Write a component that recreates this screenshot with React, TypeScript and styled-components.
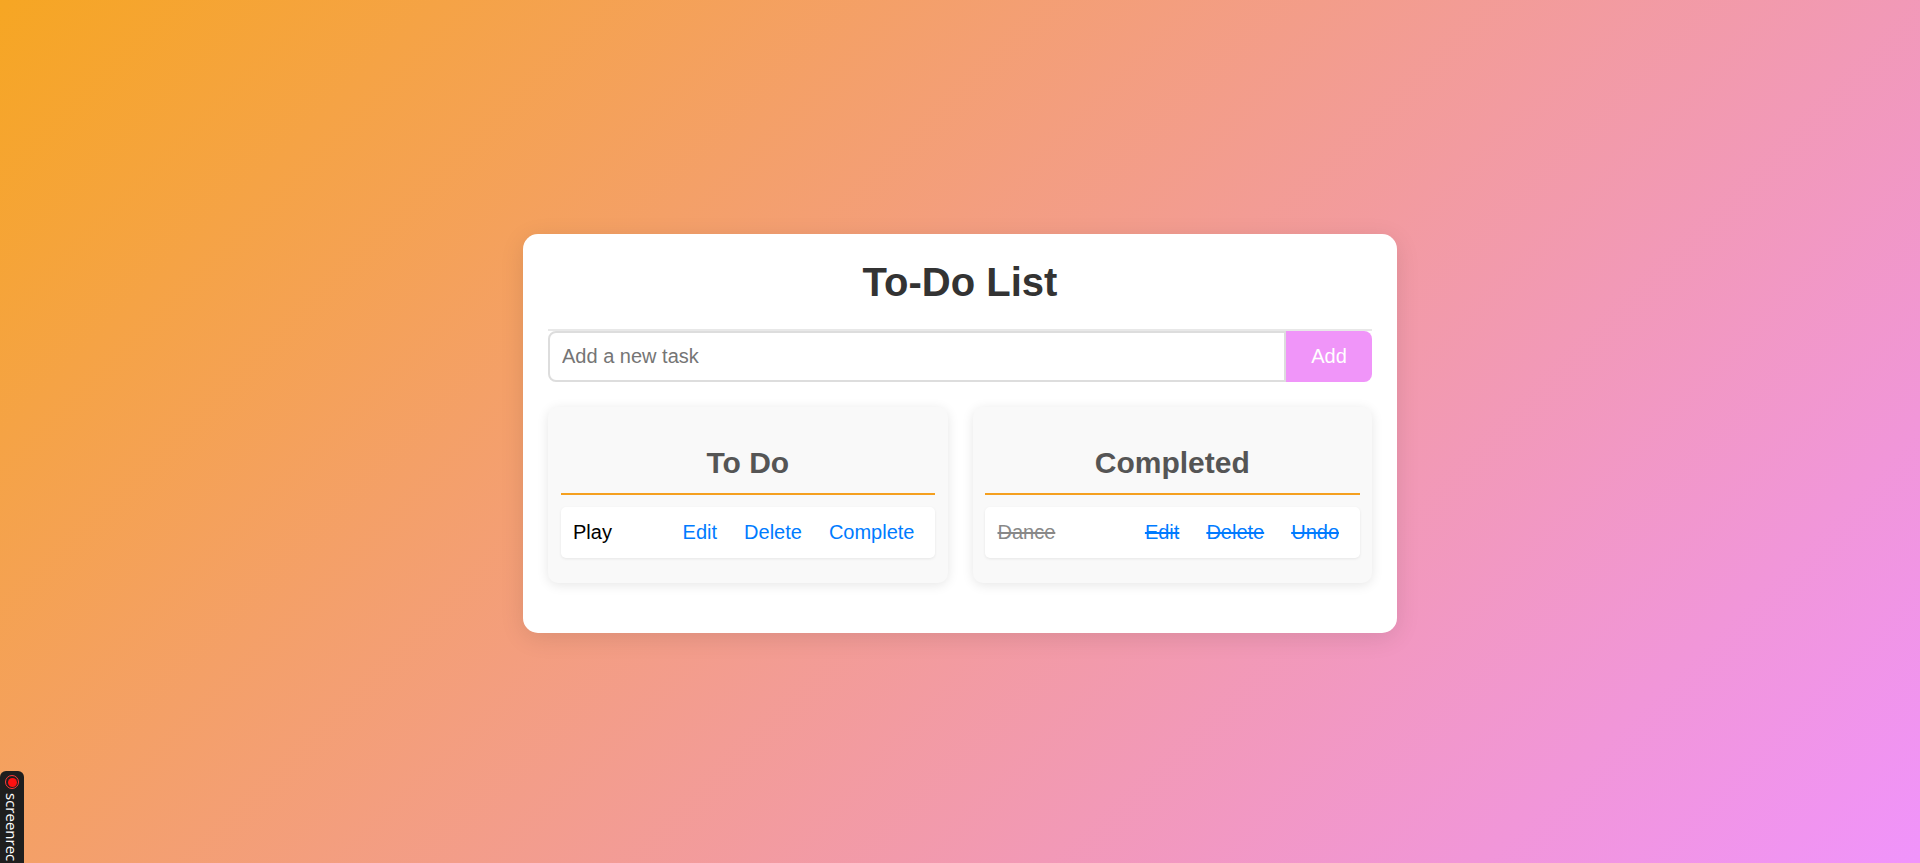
import React from "react";
import styled, { createGlobalStyle } from "styled-components";

const GlobalStyle = createGlobalStyle`
  html, body {
    margin: 0;
    padding: 0;
  }
  body {
    font-family: "Liberation Sans", Arial, sans-serif;
    background: linear-gradient(135deg, #f6a623 0%, #f093fb 100%);
    min-height: 100vh;
  }
  * { box-sizing: border-box; }
`;

const Page = styled.div`
  min-height: 100vh;
  display: flex;
  align-items: center;
  justify-content: center;
  padding-top: 4px;
`;

const Card = styled.div`
  width: 874px;
  background: #ffffff;
  border-radius: 15px;
  padding: 25px;
  box-shadow: 0 5px 25px rgba(0, 0, 0, 0.1);
`;

const Title = styled.h1`
  margin: 0 0 24px;
  font-size: 40px;
  font-weight: bold;
  color: #333333;
  text-align: center;
  line-height: 46px;
`;

const InputRow = styled.div`
  display: flex;
  border-top: 2px solid #e8e8e8;
`;

const TaskInput = styled.input`
  flex: 1;
  height: 51px;
  padding: 0 12px;
  font-family: "Liberation Sans", Arial, sans-serif;
  font-size: 20px;
  color: #333;
  border: 2px solid #dddddd;
  border-radius: 8px 0 0 8px;
  outline: none;
  &::placeholder {
    color: #757575;
  }
`;

const AddButton = styled.button`
  width: 86px;
  height: 51px;
  border: none;
  border-radius: 0 8px 8px 0;
  background: #f095f9;
  color: #ffffff;
  font-family: "Liberation Sans", Arial, sans-serif;
  font-size: 20px;
  cursor: pointer;
`;

const Columns = styled.div`
  display: grid;
  grid-template-columns: 1fr 1fr;
  gap: 25px;
  margin: 25px 0 25px;
`;

const Panel = styled.section`
  background: #f9f9f9;
  border-radius: 10px;
  padding: 12.5px;
  box-shadow: 0 2px 12px rgba(0, 0, 0, 0.1);
`;

const PanelTitle = styled.h2`
  margin: 26px 0 12px;
  padding-bottom: 13px;
  border-bottom: 2px solid #f5a01f;
  font-size: 30px;
  line-height: 34px;
  font-weight: bold;
  color: #555555;
  text-align: center;
`;

const TaskList = styled.ul`
  list-style: none;
  margin: 0;
  padding: 0;
`;

const TaskRow = styled.li`
  display: flex;
  align-items: center;
  background: #ffffff;
  border-radius: 5px;
  padding: 14px 12.5px;
  margin-bottom: 12.5px;
  box-shadow: 0 1px 3px rgba(0, 0, 0, 0.08);
`;

const TaskText = styled.span<{ $done?: boolean }>`
  flex: 1;
  font-size: 20px;
  line-height: 23px;
  color: ${(p) => (p.$done ? "#888888" : "#000000")};
  text-decoration: ${(p) => (p.$done ? "line-through" : "none")};
`;

const ActionButton = styled.button<{ $done?: boolean }>`
  background: none;
  border: none;
  padding: 0 8px;
  margin-left: 11px;
  font-family: "Liberation Sans", Arial, sans-serif;
  font-size: 20px;
  line-height: 23px;
  color: #007bff;
  cursor: pointer;
  text-decoration: ${(p) => (p.$done ? "line-through" : "none")};
`;

const RecTab = styled.div`
  position: fixed;
  left: 0;
  bottom: 0;
  width: 24px;
  height: 92px;
  background: #1e1e1e;
  border-radius: 6px 6px 0 0;
  display: flex;
  flex-direction: column;
  align-items: center;
  padding-top: 4px;
  overflow: hidden;
`;

const RecDot = styled.div`
  width: 14px;
  height: 14px;
  border-radius: 50%;
  border: 1.5px solid #ff3b3b;
  display: flex;
  align-items: center;
  justify-content: center;
  flex-shrink: 0;
  &::after {
    content: "";
    width: 9px;
    height: 9px;
    border-radius: 50%;
    background: #ff1010;
  }
`;

const RecLabel = styled.span`
  writing-mode: vertical-rl;
  color: #ffffff;
  font-family: "Open Sans", "Liberation Sans", sans-serif;
  font-size: 15px;
  margin-top: 4px;
  white-space: nowrap;
`;

export default function App() {
  return (
    <>
      <GlobalStyle />
      <Page>
        <Card>
          <Title>To-Do List</Title>
          <InputRow>
            <TaskInput placeholder="Add a new task" />
            <AddButton>Add</AddButton>
          </InputRow>
          <Columns>
            <Panel>
              <PanelTitle>To Do</PanelTitle>
              <TaskList>
                <TaskRow>
                  <TaskText>Play</TaskText>
                  <ActionButton>Edit</ActionButton>
                  <ActionButton>Delete</ActionButton>
                  <ActionButton>Complete</ActionButton>
                </TaskRow>
              </TaskList>
            </Panel>
            <Panel>
              <PanelTitle>Completed</PanelTitle>
              <TaskList>
                <TaskRow>
                  <TaskText $done>Dance</TaskText>
                  <ActionButton $done>Edit</ActionButton>
                  <ActionButton $done>Delete</ActionButton>
                  <ActionButton $done>Undo</ActionButton>
                </TaskRow>
              </TaskList>
            </Panel>
          </Columns>
        </Card>
      </Page>
      <RecTab>
        <RecDot />
        <RecLabel>screenrec</RecLabel>
      </RecTab>
    </>
  );
}
